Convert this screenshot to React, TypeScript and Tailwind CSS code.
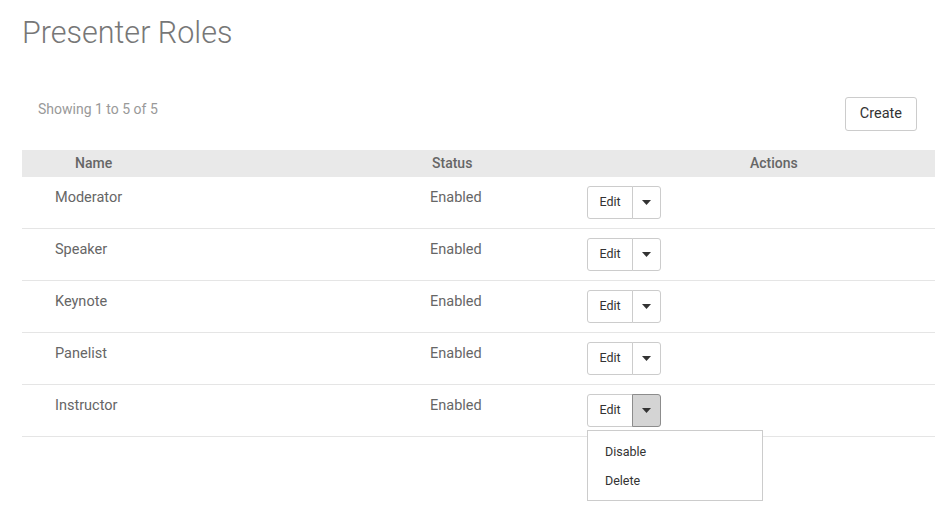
const roles = ['Moderator', 'Speaker', 'Keynote', 'Panelist', 'Instructor']

function Caret() {
  return (
    <svg width="9" height="5" viewBox="0 0 9 5" className="fill-[#333]">
      <path d="M0 0h9L4.5 5z" />
    </svg>
  )
}

function EditGroup({ open }: { open: boolean }) {
  return (
    <div className="relative flex h-[33px]">
      <button className="w-[46px] h-full border border-[#ccc] rounded-l-[3px] bg-white text-[12.5px] text-[#333]">
        Edit
      </button>
      <button
        className={
          open
            ? 'w-[29px] h-full -ml-px border border-[#8c8c8c] rounded-r-[3px] bg-[#d4d4d4] flex items-center justify-center'
            : 'w-[29px] h-full -ml-px border border-[#ccc] rounded-r-[3px] bg-white flex items-center justify-center'
        }
      >
        <Caret />
      </button>
      {open && (
        <div className="absolute left-0 top-[36px] w-[176px] h-[71px] bg-white border border-[#ccc] flex flex-col pt-[12px] pl-[17px] gap-[10px] text-[12.5px] text-[#333] z-10">
          <span>Disable</span>
          <span>Delete</span>
        </div>
      )}
    </div>
  )
}

export default function App() {
  return (
    <div className="w-[948px] h-[519px] bg-white font-['Roboto',sans-serif] text-[#666]">
      <h1 className="pl-[22px] pt-[14px] text-[30.5px] font-light text-[#777] leading-[38px]">
        Presenter Roles
      </h1>

      <div className="flex items-start justify-between pl-[38px] pr-[31px] mt-[48px]">
        <p className="text-[14px] text-[#999] leading-[18px]">Showing 1 to 5 of 5</p>
        <button className="-mt-[3px] h-[34px] px-[14px] border border-[#ccc] rounded-[3px] bg-white text-[14.5px] text-[#333]">
          Create
        </button>
      </div>

      <div className="ml-[22px] mr-[13px] mt-[19px]">
        <div className="grid grid-cols-[408px_157px_1fr] h-[27px] items-center bg-[#e9e9e9] text-[14px] font-medium text-[#666]">
          <span className="pl-[53px]">Name</span>
          <span className="pl-[2px]">Status</span>
          <span className="pl-[163px]">Actions</span>
        </div>
        {roles.map((r, i) => (
          <div
            key={r}
            className="grid grid-cols-[408px_157px_1fr] h-[52px] border-b border-[#e5e5e5] text-[14.5px] text-[#666]"
          >
            <span className="pl-[33px] pt-[10px]">{r}</span>
            <span className="pt-[10px]">Enabled</span>
            <div className="pt-[9px]">
              <EditGroup open={i === roles.length - 1} />
            </div>
          </div>
        ))}
      </div>
    </div>
  )
}
